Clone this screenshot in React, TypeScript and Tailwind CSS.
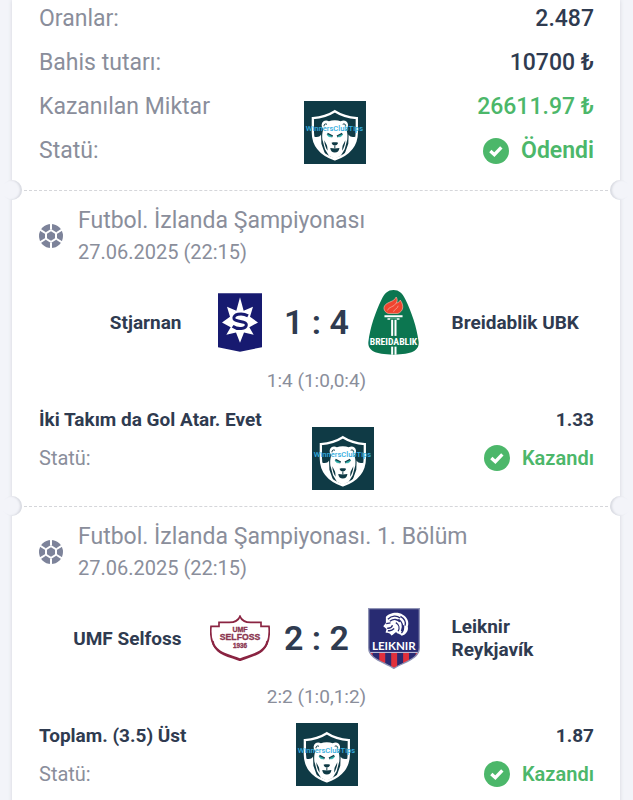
import type { ReactNode } from "react";

interface MatchProps {
  league: string;
  date: string;
  home: string;
  away: string;
  homeLogo: ReactNode;
  awayLogo: ReactNode;
  score: string;
  detail: string;
  bet: string;
  odds: string;
  watermark: ReactNode;
}

function BallIcon() {
  return (
    <svg viewBox="0 0 72 72" className="size-6 shrink-0" aria-hidden="true">
      <circle cx="36" cy="36" r="36" fill="#7d839a" />
      <path d="M36 15 54 26v20L36 57 18 46V26Z" fill="#fff" />
      <path d="M36 22 48 29v14L36 50 24 43V29Z" fill="#7d839a" />
      <path
        d="M36 16V0M53 27l16-10M53 45l16 10M36 56v16M19 45 3 55M19 27 3 17"
        stroke="#fff"
        strokeWidth="6"
      />
    </svg>
  );
}

function CheckIcon() {
  return (
    <svg viewBox="0 0 78 78" className="size-[26px] shrink-0" aria-hidden="true">
      <circle cx="39" cy="39" r="39" fill="#4cb76a" />
      <path d="M22 39l12 11 21-22" fill="none" stroke="#fff" strokeWidth="10" />
    </svg>
  );
}

function LionBadge() {
  return (
    <svg viewBox="0 0 189 192" className="h-[63px] w-[62px]" role="img" aria-label="WinnersClubTips">
      <rect width="189" height="192" fill="#0f3a45" />
      <path
        d="M94 31C77 42 54 50 27 52v43c0 39 25 68 67 83 42-15 67-44 67-83V52C134 50 111 42 94 31Z"
        fill="none"
        stroke="#fff"
        strokeWidth="7"
      />
      <path
        d="M30 108c10 3 17 2 22-6l1 28 12 34C43 152 32 132 30 108ZM158 108c-10 3-17 2-22-6l-1 28-12 34c22-12 33-32 35-56Z"
        fill="#fff"
      />
      <path
        d="M94 59c-7 0-13 1-18 3-9-6-21-1-22 9-1 7 2 12 5 15-4 11-4 22-3 31l8 30 12 20 18 9 18-9 12-20 8-30c1-9 1-20-3-31 3-3 6-8 5-15-1-10-13-15-22-9-5-2-11-3-18-3Z"
        fill="#fff"
      />
      <path d="M61 77c-1-6 4-9 9-6M127 77c1-6-4-9-9-6" fill="none" stroke="#0f3a45" strokeWidth="3" />
      <path
        d="M62 120c4 9 8 14 9 20l1 12c-6-9-10-20-10-32ZM126 120c-4 9-8 14-9 20l-1 12c6-9 10-20 10-32ZM84 127c6-2 14-2 20 0-1 5-5 8-10 9-5-1-9-4-10-9ZM80 143c9 2 19 2 28 0-1 9-6 14-14 14s-13-5-14-14Z"
        fill="#0f3a45"
      />
      <path d="M94 136v9" stroke="#0f3a45" strokeWidth="3" />
      <path d="M71 100l16 8M117 100l-16 8" stroke="#0f3a45" strokeWidth="7" />
      <path d="M71 102l14 6c-7 3-12 0-14-6ZM117 102l-14 6c7 3 12 0 14-6Z" fill="#31b7b0" stroke="#31b7b0" strokeWidth="2" />
      <text
        x="93"
        y="91"
        textAnchor="middle"
        fontSize="23"
        fill="#35aee0"
        className="font-['Roboto',sans-serif] font-medium"
      >
        WinnersClubTips
      </text>
    </svg>
  );
}

function StjarnanLogo() {
  return (
    <svg viewBox="0 0 132 176" className="h-[59px] w-11" role="img" aria-label="Stjarnan">
      <path d="M0 0h132v162l-66 14L0 162Z" fill="#171a70" />
      <path
        d="M66 12l11 41 28-12-9 30 24 17-26 14 13 23-29-7-12 31-12-31-29 7 13-23-26-14 24-17-9-30 28 12Z"
        fill="#fff"
      />
      <path d="M90 68c-20-11-46-4-42 9 4 11 38 5 37 18-1 13-26 15-41 4" fill="none" stroke="#171a70" strokeWidth="9" />
    </svg>
  );
}

function BreidablikLogo() {
  return (
    <svg viewBox="0 0 152 194" className="h-[65px] w-[51px]" role="img" aria-label="Breidablik">
      <path
        d="M76 0c17 0 27 10 36 29 17 35 34 83 39 126 2 23-15 38-75 38S-1 178 1 155C6 112 23 64 40 29 49 10 59 0 76 0Z"
        fill="#0c7650"
      />
      <path
        d="M60 70c-15-6-17-22-3-30 10-6 22-7 27-19 5 8 3 14 0 18 7-1 11-5 12-9 12 16 10 34-7 40Z"
        fill="#f0442f"
        stroke="#f6b7a8"
        strokeWidth="2"
      />
      <path d="M58 61c3-12 20-9 26-22M76 65c2-8 12-8 14-18" fill="none" stroke="#f6b7a8" strokeWidth="2" />
      <path d="M49 75h54v6H49ZM58 84h36v5H58ZM66 89h20v-4H66ZM69 89h6v104h-6ZM79 89h6v104h-6Z" fill="#fff" />
      <rect x="8" y="137" width="136" height="32" fill="#0c7650" />
      <text
        x="76"
        y="165"
        textAnchor="middle"
        fontSize="29"
        fill="#fff"
        className="font-['Liberation_Sans_Narrow','Roboto_Condensed',sans-serif] font-bold"
      >
        BREIDABLIK
      </text>
    </svg>
  );
}

function SelfossLogo() {
  return (
    <svg viewBox="0 0 180 138" className="h-[46px] w-[60px]" role="img" aria-label="UMF Selfoss">
      <path
        d="M90 4c-5 13-17 18-32 18H27v12H3c-3 30 2 57 22 74 18 15 44 19 65 28 21-9 47-13 65-28 20-17 25-44 22-74h-24V22h-31C107 22 95 17 90 4Z"
        fill="#fff"
        stroke="#8a2442"
        strokeWidth="5"
      />
      <path d="M8 78c6 38 52 42 82 55 30-13 76-17 82-55" fill="none" stroke="#8a2442" strokeWidth="6" />
      <g textAnchor="middle" fill="#8a3550" stroke="#8a3550" className="font-['Liberation_Sans',sans-serif]">
        <text x="90" y="50" fontSize="21">UMF</text>
        <text x="90" y="76" fontSize="26">SELFOSS</text>
        <text x="90" y="100" fontSize="19">1936</text>
      </g>
    </svg>
  );
}

function LeiknirLogo() {
  return (
    <svg viewBox="0 0 157 184" className="h-[61px] w-[52px]" role="img" aria-label="Leiknir">
      <defs>
        <clipPath id="leiknir-shield">
          <path d="M2 2h153v118c0 33-43 42-77 62C45 162 2 153 2 120Z" />
        </clipPath>
      </defs>
      <g clipPath="url(#leiknir-shield)">
        <rect width="157" height="184" fill="#282b72" />
        <path d="M34 136h18v48H34ZM70 136h18v48H70ZM106 136h18v48h-18ZM0 136h14v48H0ZM144 136h13v48h-13Z" fill="#e0303c" />
        <path d="M0 134h157" stroke="#c9cbe0" strokeWidth="3" />
      </g>
      <path
        d="M2 2h153v118c0 33-43 42-77 62C45 162 2 153 2 120Z"
        fill="none"
        stroke="#8f93b5"
        strokeWidth="4"
      />
      <path
        d="M54 27c9-13 36-18 51-7 14 8 20 22 15 36 4 13-8 26-18 28-5-8-14-5-17-12-6 4-9 9-15 11-3-9-9-6-17-9l3-11-10-8 8-10Z"
        fill="#fff"
      />
      <path
        d="M60 34c12-12 27-12 37-4M66 40c12-9 24-6 30 2M98 25c12 7 17 17 14 28M92 34c12 8 15 22 9 36M84 44c10 6 12 17 7 26M55 47l13-2M58 61c9 1 14-3 16-9M60 68c7 2 13 0 19-6M107 52c2 10-1 18-6 24"
        fill="none"
        stroke="#282b72"
        strokeWidth="4"
      />
      <text
        x="78"
        y="127"
        textAnchor="middle"
        fontSize="35"
        fill="#fff"
        className="font-['Lato',sans-serif] font-bold"
      >
        LEIKNIR
      </text>
    </svg>
  );
}

function Perforation() {
  return (
    <div className="relative">
      <div className="mx-3 border-t border-dashed border-[#d5d6da]" />
      <span className="absolute -top-[10px] -left-[10px] size-5 rounded-full bg-[#f3f4f9] shadow-[inset_-2px_0_2px_#d9dbe2]" />
      <span className="absolute -top-[10px] -right-[10px] size-5 rounded-full bg-[#f3f4f9] shadow-[inset_2px_0_2px_#d9dbe2]" />
    </div>
  );
}

function Match({
  league,
  date,
  home,
  away,
  homeLogo,
  awayLogo,
  score,
  detail,
  bet,
  odds,
  watermark,
}: MatchProps) {
  return (
    <section className="relative pt-4 pr-[26px] pb-[35px] pl-[27px]">
      <div className="flex items-center gap-[15px]">
        <BallIcon />
        <div>
          <h2 className="text-[23px] leading-7 text-[#8a8e9b]">{league}</h2>
          <p className="mt-1 text-[20px] leading-[26px] text-[#8a8e9b]">{date}</p>
        </div>
      </div>

      <div className="mt-6 grid h-[66px] grid-cols-[1fr_60px_94px_60px_1fr] items-center text-[19px] leading-[23px] font-bold text-[#2f3b50]">
        <p className="pr-7 text-right">{home}</p>
        <div className="flex justify-center">{homeLogo}</div>
        <p className="text-center text-[34px] leading-10 font-semibold">{score}</p>
        <div className="flex justify-center">{awayLogo}</div>
        <p className="pr-1 pl-7">{away}</p>
      </div>

      <p className="mt-[14px] text-center text-[19px] leading-6 text-[#8a8e9b]">{detail}</p>

      <div className="mt-[15px] flex justify-between text-[19px] leading-6 font-bold text-[#2f3b50]">
        <span>{bet}</span>
        <span>{odds}</span>
      </div>
      <div className="mt-[13px] flex items-center justify-between text-[20px] leading-[26px]">
        <span className="text-[#8a8e9b]">Statü:</span>
        <span className="flex items-center gap-3 font-semibold text-[#4cb76a]">
          <CheckIcon />
          Kazandı
        </span>
      </div>
      {watermark}
    </section>
  );
}

export default function App() {
  return (
    <main className="h-screen overflow-hidden bg-[#f3f4f9] pr-[13px] pl-3 font-['Roboto',sans-serif]">
      <div className="min-h-screen bg-white shadow-[0_0_4px_#d3d6dd]">
        <section className="relative pt-[5px] pr-[26px] pb-[25px] pl-[27px]">
          <dl className="flex flex-col gap-4 text-[23px] leading-7 text-[#8a8e9b]">
            <div className="flex justify-between">
              <dt>Oranlar:</dt>
              <dd className="font-medium text-[#2f3b50]">2.487</dd>
            </div>
            <div className="flex justify-between">
              <dt>Bahis tutarı:</dt>
              <dd className="font-medium text-[#2f3b50]">10700 ₺</dd>
            </div>
            <div className="flex justify-between">
              <dt>Kazanılan Miktar</dt>
              <dd className="font-medium text-[#4cb76a]">26611.97 ₺</dd>
            </div>
            <div className="flex justify-between">
              <dt>Statü:</dt>
              <dd className="flex items-center gap-3 font-semibold text-[#4cb76a]">
                <CheckIcon />
                Ödendi
              </dd>
            </div>
          </dl>
          <div className="absolute bottom-[26px] left-1/2 -ml-3">
            <LionBadge />
          </div>
        </section>

        <Perforation />
        <Match
          league="Futbol. İzlanda Şampiyonası"
          date="27.06.2025 (22:15)"
          home="Stjarnan"
          away="Breidablik UBK"
          homeLogo={<StjarnanLogo />}
          awayLogo={<BreidablikLogo />}
          score="1 : 4"
          detail="1:4 (1:0,0:4)"
          bet="İki Takım da Gol Atar. Evet"
          odds="1.33"
          watermark={
            <div className="absolute bottom-4 left-1/2 -ml-1">
              <LionBadge />
            </div>
          }
        />

        <Perforation />
        <Match
          league="Futbol. İzlanda Şampiyonası. 1. Bölüm"
          date="27.06.2025 (22:15)"
          home="UMF Selfoss"
          away="Leiknir Reykjavík"
          homeLogo={<SelfossLogo />}
          awayLogo={<LeiknirLogo />}
          score="2 : 2"
          detail="2:2 (1:0,1:2)"
          bet="Toplam. (3.5) Üst"
          odds="1.87"
          watermark={
            <div className="absolute bottom-9 left-1/2 -ml-5">
              <LionBadge />
            </div>
          }
        />
      </div>
    </main>
  );
}
